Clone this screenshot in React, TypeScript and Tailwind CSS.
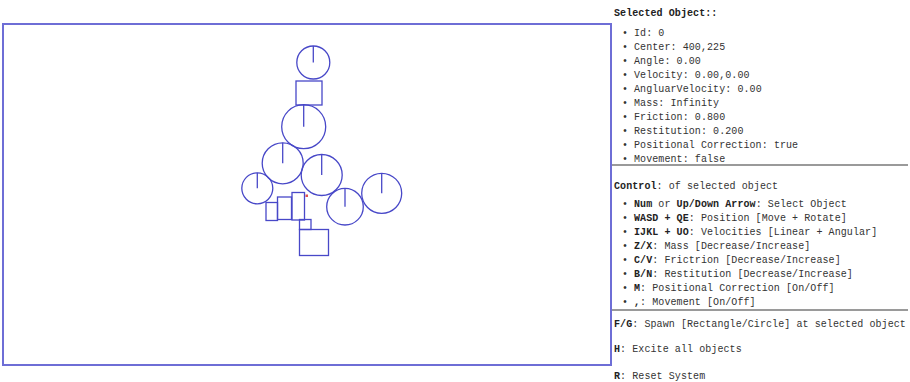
import React from 'react';

type Circle = { cx: number; cy: number; r: number };
type Rect = { x: number; y: number; w: number; h: number };

// page-space coordinates; the svg viewBox is offset so they line up
const circles: Circle[] = [
  { cx: 313.3, cy: 62.5, r: 16.5 },
  { cx: 303.7, cy: 126.7, r: 22 },
  { cx: 282.7, cy: 163.3, r: 20.5 },
  { cx: 321.7, cy: 175, r: 20.5 },
  { cx: 257.3, cy: 188.3, r: 15.5 },
  { cx: 345, cy: 206.7, r: 18.3 },
  { cx: 381.7, cy: 193.3, r: 20 },
];

const rects: Rect[] = [
  { x: 296, y: 81, w: 26, h: 24 },
  { x: 266, y: 202.5, w: 11.5, h: 18 },
  { x: 277.5, y: 197, w: 14, h: 22.5 },
  { x: 292, y: 192.5, w: 12.5, h: 27.5 },
  { x: 299.5, y: 219.5, w: 11.5, h: 10 },
  { x: 299.5, y: 229.5, w: 29, h: 26 },
];

const objectInfo: [string, string][] = [
  ['Id', '0'],
  ['Center', '400,225'],
  ['Angle', '0.00'],
  ['Velocity', '0.00,0.00'],
  ['AngluarVelocity', '0.00'],
  ['Mass', 'Infinity'],
  ['Friction', '0.800'],
  ['Restitution', '0.200'],
  ['Positional Correction', 'true'],
  ['Movement', 'false'],
];

function Bullet({ children }: { children: React.ReactNode }) {
  return (
    <li className="flex h-[14px] items-center whitespace-pre">
      <span className="w-[12px] shrink-0">•</span>
      <span>{children}</span>
    </li>
  );
}

function Scene() {
  return (
    <svg width={606} height={339} viewBox="4 25 606 339" className="block">
      <g fill="none" stroke="#4848c8" strokeWidth={1.3}>
        {circles.map((c, i) => (
          <g key={i}>
            <circle cx={c.cx} cy={c.cy} r={c.r} />
            <line x1={c.cx} y1={c.cy} x2={c.cx} y2={c.cy - c.r} />
          </g>
        ))}
        {rects.map((r, i) => (
          <rect key={i} x={r.x} y={r.y} width={r.w} height={r.h} />
        ))}
      </g>
      <rect x={305.5} y={194.5} width={2.5} height={2.5} fill="#e05050" />
    </svg>
  );
}

export default function App() {
  return (
    <div
      className="flex h-[382px] w-[910px] overflow-hidden bg-white text-[10px] tracking-[0.08px] text-[#333]"
      style={{ fontFamily: '"Liberation Mono", "Noto Sans CJK SC", monospace' }}
    >
      <div className="ml-[2px] mt-[23px] h-[343px] w-[610px] shrink-0 border-2 border-[#6e6ed6]">
        <Scene />
      </div>

      <div className="flex w-[296px] flex-col">
        <div className="ml-[2px] mt-[7px] h-[14px] leading-[14px] font-bold text-[#222]">Selected Object::</div>
        <ul className="mt-[5px] pl-[10px]">
          {objectInfo.map(([k, v]) => (
            <Bullet key={k}>
              {k}: {v}
            </Bullet>
          ))}
        </ul>
        <div className="-mt-[2px] border-t-2 border-[#9a9a9a]" />

        <div className="ml-[2px] mt-[14px] h-[14px] leading-[14px]">
          <b className="text-[#222]">Control</b>: of selected object
        </div>
        <ul className="mt-[3px] pl-[10px]">
          <Bullet>
            <b className="text-[#222]">Num</b> or <b className="text-[#222]">Up/Down Arrow</b>: Select Object
          </Bullet>
          <Bullet>
            <b className="text-[#222]">WASD + QE</b>: Position [Move + Rotate]
          </Bullet>
          <Bullet>
            <b className="text-[#222]">IJKL + UO</b>: Velocities [Linear + Angular]
          </Bullet>
          <Bullet>
            <b className="text-[#222]">Z/X</b>: Mass [Decrease/Increase]
          </Bullet>
          <Bullet>
            <b className="text-[#222]">C/V</b>: Frictrion [Decrease/Increase]
          </Bullet>
          <Bullet>
            <b className="text-[#222]">B/N</b>: Restitution [Decrease/Increase]
          </Bullet>
          <Bullet>
            <b className="text-[#222]">M</b>: Positional Correction [On/Off]
          </Bullet>
          <Bullet>
            <b className="text-[#222]">,</b>: Movement [On/Off]
          </Bullet>
        </ul>
        <div className="border-t-2 border-[#9a9a9a]" />

        <div className="ml-[2px] mt-[7px] h-[14px] leading-[14px] whitespace-pre">
          <b className="text-[#222]">F/G</b>: Spawn [Rectangle/Circle] at selected object
        </div>
        <div className="ml-[2px] mt-[11px] h-[14px] leading-[14px]">
          <b className="text-[#222]">H</b>: Excite all objects
        </div>
        <div className="ml-[2px] mt-[13px] h-[14px] leading-[14px]">
          <b className="text-[#222]">R</b>: Reset System
        </div>
      </div>
    </div>
  );
}
